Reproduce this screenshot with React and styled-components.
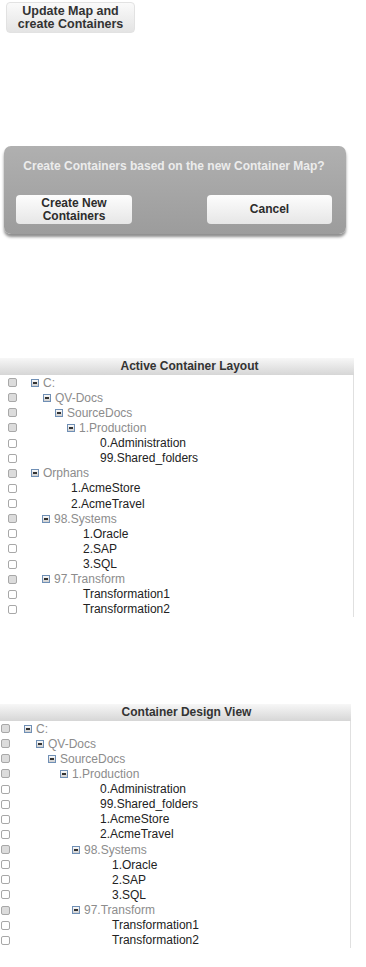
import React from "react";
import styled, { createGlobalStyle } from "styled-components";

const GlobalStyle = createGlobalStyle`
  html, body {
    margin: 0;
    padding: 0;
    background: #fff;
    font-family: "Liberation Sans", Arial, sans-serif;
  }
`;

const Page = styled.div`
  width: 366px;
  height: 967px;
  display: flex;
  flex-direction: column;
  align-items: flex-start;
  overflow: hidden;
`;

const ActionButton = styled.button`
  margin: 2px 0 0 6px;
  width: 129px;
  height: 31px;
  padding: 0;
  border: 1px solid #e2e2e2;
  border-radius: 4px;
  background: linear-gradient(to bottom, #fafafa, #e4e4e4);
  color: #333;
  font-family: "Liberation Sans", Arial, sans-serif;
  font-size: 12.5px;
  font-weight: bold;
  line-height: 13px;
`;

const Dialog = styled.div`
  margin: 113px 0 0 4px;
  width: 342px;
  height: 88px;
  box-sizing: border-box;
  padding: 13px 14px 10px 12px;
  border-radius: 7px;
  background: linear-gradient(to bottom, #b0b0b0, #9c9c9c);
  box-shadow: 0 3px 3px rgba(0, 0, 0, 0.45);
  display: flex;
  flex-direction: column;
  justify-content: space-between;
`;

const DialogText = styled.div`
  color: #ececec;
  font-size: 12px;
  font-weight: bold;
  text-align: center;
  line-height: 14px;
`;

const DialogButtons = styled.div`
  display: flex;
  justify-content: space-between;
`;

const DialogButton = styled.button`
  width: ${p => p.$w}px;
  height: 29px;
  padding: 0;
  border: none;
  border-radius: 4px;
  background: linear-gradient(to bottom, #fdfdfd, #e6e6e6);
  color: #2c2c2c;
  font-family: "Liberation Sans", Arial, sans-serif;
  font-size: 12px;
  font-weight: bold;
  line-height: 13px;
`;

const Panel = styled.div`
  margin-top: ${p => p.$top}px;
  width: ${p => p.$w}px;
  display: flex;
  flex-direction: column;
`;

const PanelHeader = styled.div`
  height: 17px;
  line-height: 17px;
  text-align: center;
  font-size: 12px;
  font-weight: bold;
  color: #333;
  padding-left: ${p => p.$shift}px;
  background: linear-gradient(to bottom, #f7f7f7, #d6d6d6);
`;

const Rows = styled.div`
  border-right: 1px solid #e0e0e0;
  display: flex;
  flex-direction: column;
`;

const Row = styled.div`
  height: 15.13px;
  display: flex;
  align-items: center;
  padding-left: ${p => p.$boxLeft}px;
`;

const Check = styled.span`
  flex: none;
  width: 7px;
  height: 7px;
  border: 1px solid #a8a8a8;
  border-radius: 2px;
  background: ${p => (p.$folder ? "#dcdcdc" : "#fff")};
`;

const Node = styled.span`
  display: flex;
  align-items: center;
  margin-left: ${p => p.$indent}px;
  font-size: 12px;
  white-space: nowrap;
  color: ${p => (p.$folder ? "#8c8c8c" : "#222")};
`;

const Toggle = styled.span`
  position: relative;
  flex: none;
  width: 6px;
  height: 6px;
  margin-right: 4px;
  border: 1px solid #6f8fb5;
  background: linear-gradient(to bottom, #fafafa, #cfcfcf);

  &::after {
    content: "";
    position: absolute;
    left: 1px;
    top: 2px;
    width: 4px;
    height: 2px;
    background: #333;
  }
`;

const activeLayout = [
  ["C:", 31, true],
  ["QV-Docs", 43, true],
  ["SourceDocs", 55, true],
  ["1.Production", 67, true],
  ["0.Administration", 100],
  ["99.Shared_folders", 100],
  ["Orphans", 31, true],
  ["1.AcmeStore", 71],
  ["2.AcmeTravel", 71],
  ["98.Systems", 42, true],
  ["1.Oracle", 83],
  ["2.SAP", 83],
  ["3.SQL", 83],
  ["97.Transform", 42, true],
  ["Transformation1", 83],
  ["Transformation2", 83]
];

const designView = [
  ["C:", 24, true],
  ["QV-Docs", 36, true],
  ["SourceDocs", 48, true],
  ["1.Production", 60, true],
  ["0.Administration", 100],
  ["99.Shared_folders", 100],
  ["1.AcmeStore", 100],
  ["2.AcmeTravel", 100],
  ["98.Systems", 72, true],
  ["1.Oracle", 112],
  ["2.SAP", 112],
  ["3.SQL", 112],
  ["97.Transform", 72, true],
  ["Transformation1", 112],
  ["Transformation2", 112]
];

const Tree = ({ title, items, top, width, boxLeft, shift }) => (
  <Panel $top={top} $w={width}>
    <PanelHeader $shift={shift}>{title}</PanelHeader>
    <Rows>
      {items.map(([label, x, folder]) => (
        <Row key={label} $boxLeft={boxLeft}>
          <Check $folder={folder} />
          <Node $folder={folder} $indent={x - boxLeft - 9}>
            {folder && <Toggle />}
            {label}
          </Node>
        </Row>
      ))}
    </Rows>
  </Panel>
);

const App = () => (
  <Page>
    <GlobalStyle />
    <ActionButton>
      Update Map and
      <br />
      create Containers
    </ActionButton>

    <Dialog>
      <DialogText>Create Containers based on the new Container Map?</DialogText>
      <DialogButtons>
        <DialogButton $w={116}>
          Create New
          <br />
          Containers
        </DialogButton>
        <DialogButton $w={125}>Cancel</DialogButton>
      </DialogButtons>
    </Dialog>

    <Tree
      title="Active Container Layout"
      items={activeLayout}
      top={124}
      width={354}
      boxLeft={8}
      shift={25}
    />

    <Tree
      title="Container Design View"
      items={designView}
      top={87}
      width={351}
      boxLeft={1}
      shift={22}
    />
  </Page>
);

export default App;
